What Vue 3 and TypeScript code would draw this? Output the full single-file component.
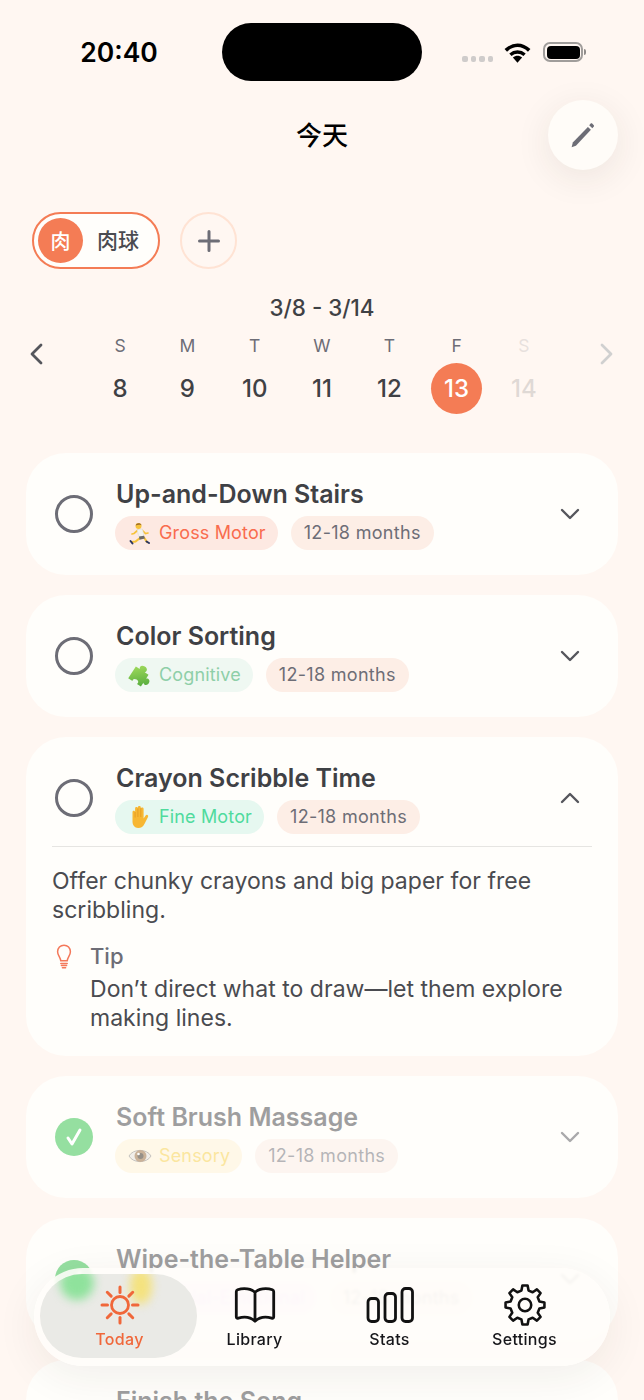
<script setup lang="ts">
type Tag = 'run' | 'puzzle' | 'hand' | 'eye' | 'social' | 'music'

interface Activity {
  title: string
  category: string
  tone: string
  icon: Tag
  done?: boolean
  open?: boolean
  body?: string
  tip?: string
}

const days = [
  { letter: 'S', num: 8 },
  { letter: 'M', num: 9 },
  { letter: 'T', num: 10 },
  { letter: 'W', num: 11 },
  { letter: 'T', num: 12 },
  { letter: 'F', num: 13, today: true },
  { letter: 'S', num: 14, future: true },
]

const activities: Activity[] = [
  { title: 'Up-and-Down Stairs', category: 'Gross Motor', tone: 'gross', icon: 'run' },
  { title: 'Color Sorting', category: 'Cognitive', tone: 'cognitive', icon: 'puzzle' },
  {
    title: 'Crayon Scribble Time',
    category: 'Fine Motor',
    tone: 'fine',
    icon: 'hand',
    open: true,
    body: 'Offer chunky crayons and big paper for free scribbling.',
    tip: 'Don\u2019t direct what to draw\u2014let them explore making lines.',
  },
  { title: 'Soft Brush Massage', category: 'Sensory', tone: 'sensory', icon: 'eye', done: true },
  { title: 'Wipe-the-Table Helper', category: 'Social-Emotional', tone: 'social', icon: 'social', done: true },
  { title: 'Finish the Song', category: 'Language', tone: 'gross', icon: 'music', done: true },
]

// 8 tooth gear outline, drawn around 12,12
function gearPath(): string {
  const pts: string[] = []
  const teeth = 8
  for (let i = 0; i < teeth; i++) {
    const a = (i / teeth) * Math.PI * 2
    const step = Math.PI / teeth
    const list: [number, number][] = [
      [8.1, a - step * 0.62],
      [10.7, a - step * 0.34],
      [10.7, a + step * 0.34],
      [8.1, a + step * 0.62],
    ]
    for (const [r, t] of list) {
      pts.push(`${(12 + r * Math.sin(t)).toFixed(2)} ${(12 - r * Math.cos(t)).toFixed(2)}`)
    }
  }
  return 'M' + pts.join('L') + 'Z'
}

const gear = gearPath()
const sunRays = [0, 45, 90, 135, 180, 225, 270, 315]
</script>

<template>
  <div class="page">
    <div class="status">
      <div class="time">20:40</div>
      <div class="island"></div>
      <div class="status-right">
        <div class="dots"><i></i><i></i><i></i><i></i></div>
        <svg class="wifi" width="27" height="20" viewBox="0 0 27 20">
          <path d="M1.800 7.400C9 .6 18 .6 25.200 7.400" fill="none" stroke="#000" stroke-width="3.600" />
          <path d="M6.400 11.800c4.200-3.700 10-3.700 14.200 0" fill="none" stroke="#000" stroke-width="3.400" />
          <path d="M8.900 14.400c2.800-2.200 6.400-2.200 9.200 0l-4.600 5.400z" fill="#000" />
        </svg>
        <div class="battery"><span></span></div>
        <div class="nub"></div>
      </div>
    </div>

    <header class="head">
      <h1>今天</h1>
      <button class="edit">
        <svg width="28" height="28" viewBox="0 0 28 28">
          <path d="M2.600 26.200l1.200-4.800L18.900 5.900l3 2.900L6.900 24.700z" fill="#6d6d76" />
          <path d="M20.200 4.200l1.300-1.400c.6-.6 1.300-.6 1.900 0l1.200 1.100c.6.600.6 1.300 0 1.900l-1.300 1.400z" fill="#6d6d76" />
        </svg>
      </button>
    </header>

    <div class="kids">
      <div class="kid">
        <span class="avatar">肉</span>
        <span class="kid-name">肉球</span>
      </div>
      <button class="add">
        <svg width="24" height="24" viewBox="0 0 24 24">
          <path d="M12 2.500v19M2.500 12h19" stroke="#6d6d76" stroke-width="3" stroke-linecap="round" />
        </svg>
      </button>
    </div>

    <div class="range">3/8 - 3/14</div>
    <div class="week">
      <div class="side left">
        <svg width="14" height="22" viewBox="0 0 14 22">
          <path d="M12 2L3 11l9 9" fill="none" stroke="#55565c" stroke-width="2.800" stroke-linecap="round" stroke-linejoin="round" />
        </svg>
      </div>
      <div class="days">
        <div v-for="d in days" :key="d.num" class="day" :class="{ future: d.future }">
          <span class="letter">{{ d.letter }}</span>
          <span class="num" :class="{ today: d.today }">{{ d.num }}</span>
        </div>
      </div>
      <div class="side right">
        <svg width="14" height="22" viewBox="0 0 14 22">
          <path d="M2 2l9 9-9 9" fill="none" stroke="#d0d0d0" stroke-width="2.800" stroke-linecap="round" stroke-linejoin="round" />
        </svg>
      </div>
    </div>

    <div class="list">
      <section v-for="a in activities" :key="a.title" class="card" :class="{ done: a.done }">
        <div class="row">
          <div class="check">
            <svg v-if="a.done" width="22" height="22" viewBox="0 0 22 22">
              <path d="M5 12l4 6 8-14" fill="none" stroke="#fff" stroke-width="3" stroke-linecap="round" stroke-linejoin="round" />
            </svg>
          </div>
          <div class="info">
            <h2>{{ a.title }}</h2>
            <div class="tags">
              <span class="tag" :class="a.tone">
                <svg class="emoji" viewBox="0 0 24 24">
                  <g v-if="a.icon === 'run'">
                    <path d="M10 9L6 12.500l-2 .5M14 9l3.500 3.500 2.500-.5" stroke="#f6c33a" stroke-width="1.700" stroke-linecap="round" fill="none" />
                    <path d="M12 17l-4.500 3.500L4 21M16 16.500l3 4.500" stroke="#f6c33a" stroke-width="2.200" stroke-linecap="round" fill="none" />
                    <path d="M9 8.500l5.500-.5 1.500 7-5 1z" fill="#f3f3ef" stroke="#d8d8d2" stroke-width=".5" />
                    <path d="M11 15.500l5-.8 1 2.800-5.500 1.200z" fill="#6b6a68" />
                    <circle cx="10.500" cy="5" r="3" fill="#f6c33a" />
                    <path d="M7.800 4.500C8 2 12.600 1.400 13.500 4.300 11.500 3.500 9.500 3.800 7.800 4.500z" fill="#9a6a2c" />
                    <path d="M2.500 20l2 2.500M18.500 20.500l2.500 1.500" stroke="#2c3560" stroke-width="2" stroke-linecap="round" />
                  </g>
                  <g v-else-if="a.icon === 'puzzle'">
                    <linearGradient id="piece" x1="0" y1="0" x2="1" y2="1">
                      <stop offset="0" stop-color="#a8e05f" />
                      <stop offset="1" stop-color="#4da63a" />
                    </linearGradient>
                    <path
                      transform="rotate(33 12 12) translate(12 12) scale(1.080) translate(-12 -12)"
                      d="M4.500 7.500h4.300c-1.600-1.500-1-4.500 2.700-4.500s4.300 3 2.700 4.500h4.300v4.300c1.500-1.600 4.500-1 4.500 2.200s-3 3.800-4.500 2.200v4.300h-4.300c.8-1.400 0-3.200-2.500-3.200s-3.300 1.800-2.500 3.200H4.500z"
                      fill="url(#piece)"
                    />
                  </g>
                  <g v-else-if="a.icon === 'hand'">
                    <path
                      d="M4.500 13V7c0-1.700 2.600-1.700 2.600 0V3.500c0-1.900 2.800-1.900 2.800 0V2.300c0-1.900 2.900-1.900 2.900 0v1.500c0-1.800 2.800-1.800 2.800 0V13.500l2-2.900c1.100-1.600 3.300-.3 2.400 1.400l-3.300 6.500c-1.400 3-3.500 4.500-6.500 4.500-3.700 0-5.700-3-5.700-6.500z"
                      fill="#f7b733"
                    />
                    <path d="M7.100 7v5.500M9.900 3.500v8.500M12.800 3v9" stroke="#d88f1c" stroke-width=".6" fill="none" />
                  </g>
                  <g v-else-if="a.icon === 'eye'">
                    <path d="M1 12C5 4.500 19 4.500 23 12 19 19.500 5 19.500 1 12z" fill="#e4e0da" stroke="#8f8a84" stroke-width="1" />
                    <circle cx="12.500" cy="12" r="6" fill="#96683a" />
                    <circle cx="12.500" cy="12" r="3" fill="#2f2418" />
                    <circle cx="10.500" cy="10" r="1.300" fill="#fff" />
                  </g>
                  <circle v-else cx="12" cy="12" r="10" fill="#f7d13c" />
                </svg>
                {{ a.category }}
              </span>
              <span class="tag age">12-18 months</span>
            </div>
          </div>
          <svg class="chev" width="20" height="12" viewBox="0 0 20 12">
            <path
              :d="a.open ? 'M2 10l8-8 8 8' : 'M2 2l8 8 8-8'"
              fill="none"
              stroke="#55565c"
              stroke-width="2.400"
              stroke-linecap="round"
              stroke-linejoin="round"
            />
          </svg>
        </div>

        <div v-if="a.open" class="detail">
          <p class="body">{{ a.body }}</p>
          <div class="tip">
            <svg width="16" height="25" viewBox="0 0 16 25" class="bulb">
              <path
                d="M8 1.200C4.300 1.200 1.600 4 1.600 7.800c0 3.400 2.600 5.300 3.200 9h6.400c.6-3.700 3.200-5.600 3.200-9C14.400 4 11.700 1.200 8 1.200zM4.800 19.400h6.400M5.400 21.600h5.200M6.400 23.800h3.200"
                fill="none"
                stroke="#f4785a"
                stroke-width="1.500"
                stroke-linecap="round"
              />
            </svg>
            <div>
              <div class="tip-label">Tip</div>
              <p class="body">{{ a.tip }}</p>
            </div>
          </div>
        </div>
      </section>
    </div>

    <nav class="tabbar">
      <div class="tab active">
        <span class="pill">
          <i class="blob green"></i>
          <i class="blob yellow"></i>
        </span>
        <svg class="tab-icon" viewBox="0 0 44 44">
          <circle cx="22" cy="22" r="8.500" fill="none" stroke="#f0673a" stroke-width="2.800" />
          <path
            v-for="r in sunRays"
            :key="r"
            d="M22 4v5.500"
            stroke="#f0673a"
            stroke-width="3"
            stroke-linecap="round"
            :transform="`rotate(${r} 22 22)`"
          />
        </svg>
        <span class="tab-label">Today</span>
      </div>
      <div class="tab">
        <svg class="tab-icon" viewBox="0 0 44 44">
          <path
            d="M22 9.500C19 5.500 10.500 4.500 4.600 6.800c-.9.4-1.300 1-1.300 2v25c0 1.200.8 1.800 2 1.400 5.800-1.800 12-1.200 16.700 3 4.700-4.200 10.900-4.800 16.700-3 1.200.4 2 -.2 2-1.400v-25c0-1-.4-1.600-1.300-2C33.500 4.500 25 5.500 22 9.500zM22 9.500V38"
            fill="none"
            stroke="#111"
            stroke-width="2.800"
            stroke-linejoin="round"
          />
        </svg>
        <span class="tab-label">Library</span>
      </div>
      <div class="tab">
        <svg class="tab-icon" viewBox="0 0 50 44">
          <rect x="3" y="15.500" width="10.500" height="23" rx="3.500" fill="none" stroke="#111" stroke-width="2.800" />
          <rect x="20" y="10.500" width="10.500" height="28" rx="3.500" fill="none" stroke="#111" stroke-width="2.800" />
          <rect x="37" y="5.500" width="10.500" height="33" rx="3.500" fill="none" stroke="#111" stroke-width="2.800" />
        </svg>
        <span class="tab-label">Stats</span>
      </div>
      <div class="tab">
        <svg class="tab-icon" viewBox="0 0 24 24">
          <path :d="gear" fill="none" stroke="#111" stroke-width="1.400" stroke-linejoin="round" />
          <circle cx="12" cy="12" r="3.400" fill="none" stroke="#111" stroke-width="1.400" />
        </svg>
        <span class="tab-label">Settings</span>
      </div>
    </nav>
  </div>
</template>

<style>
html,
body {
  margin: 0;
  background: #fff7f2;
}
</style>

<style scoped>
.page {
  position: relative;
  width: 644px;
  height: 1400px;
  overflow: hidden;
  background: #fff7f2;
  font-family: Inter, 'Noto Sans CJK SC', sans-serif;
  color: #3f4145;
}

.status {
  display: grid;
  grid-template-columns: 222px 200px 222px;
  padding-top: 23px;
  box-sizing: border-box;
  height: 100px;
}
.time {
  height: 58px;
  line-height: 58px;
  text-align: center;
  padding-left: 16px;
  font-size: 26.500px;
  font-weight: 600;
  color: #000;
}
.island {
  height: 58px;
  border-radius: 29px;
  background: #000;
}
.status-right {
  display: flex;
  align-items: flex-start;
  padding-left: 40px;
  padding-top: 19px;
}
.dots {
  display: flex;
  gap: 3px;
  margin-top: 14px;
}
.dots i {
  width: 5.500px;
  height: 5.500px;
  border-radius: 2px;
  background: #cfcccb;
}
.wifi {
  margin-left: 11px;
  margin-top: 1px;
}
.battery {
  box-sizing: border-box;
  width: 40px;
  height: 20px;
  margin-left: 12px;
  padding: 1.500px;
  border: 2px solid #a09d9b;
  border-radius: 7px;
}
.battery span {
  display: block;
  height: 100%;
  border-radius: 4px;
  background: #000;
}
.nub {
  width: 2px;
  height: 6px;
  margin: 7px 0 0 1px;
  border-radius: 0 2px 2px 0;
  background: #8f8c8a;
}

.head {
  position: relative;
  height: 70px;
  display: flex;
  align-items: center;
  justify-content: center;
}
.head h1 {
  margin: 0 0 3px;
  font-size: 26px;
  font-weight: 500;
  color: #000;
}
.edit {
  position: absolute;
  left: 548px;
  top: 0;
  width: 70px;
  height: 70px;
  padding: 0;
  border: 0;
  border-radius: 50%;
  background: #fffcf8;
  box-shadow: 0 8px 36px rgba(60, 40, 30, 0.09);
  display: flex;
  align-items: center;
  justify-content: center;
}

.kids {
  display: flex;
  gap: 20px;
  margin-top: 42px;
  padding-left: 32px;
}
.kid {
  box-sizing: border-box;
  width: 128px;
  height: 57px;
  border: 2.500px solid #f47c55;
  border-radius: 29px;
  background: #fffefb;
  display: flex;
  align-items: center;
  padding-left: 4px;
}
.avatar {
  width: 45px;
  height: 45px;
  border-radius: 50%;
  background: #f47c55;
  color: #fff;
  font-size: 20px;
  font-weight: 500;
  display: flex;
  align-items: center;
  justify-content: center;
}
.kid-name {
  margin: 0 0 3px 14px;
  font-size: 21px;
  font-weight: 500;
  color: #4a4b50;
}
.add {
  box-sizing: border-box;
  width: 57px;
  height: 57px;
  padding: 0;
  border: 2.500px solid #ffe3d4;
  border-radius: 50%;
  background: transparent;
  display: flex;
  align-items: center;
  justify-content: center;
}

.range {
  margin-top: 25px;
  height: 28px;
  line-height: 28px;
  text-align: center;
  font-size: 22.400px;
  font-weight: 500;
}
.week {
  display: flex;
  margin-top: 11px;
}
.side {
  flex: 0 0 86.400px;
  display: flex;
  box-sizing: border-box;
  padding-top: 10px;
}
.side.left {
  padding-left: 29px;
}
.side.right {
  justify-content: flex-end;
  padding-right: 30px;
}
.days {
  flex: 1;
  display: grid;
  grid-template-columns: repeat(7, 1fr);
}
.day {
  display: flex;
  flex-direction: column;
  align-items: center;
  gap: 5px;
}
.day.future {
  opacity: 0.16;
}
.letter {
  height: 25px;
  line-height: 26px;
  font-size: 17.500px;
  color: #6d6d76;
}
.num {
  width: 51px;
  height: 51px;
  line-height: 51px;
  border-radius: 50%;
  text-align: center;
  font-size: 24px;
  font-weight: 500;
}
.num.today {
  background: #f47c55;
  color: #fff;
}

.list {
  display: flex;
  flex-direction: column;
  gap: 20px;
  margin-top: 39px;
  padding: 0 26px;
}
.card {
  border-radius: 40px;
  background: #fffefb;
}
.row {
  display: flex;
  align-items: center;
  height: 122px;
  box-sizing: border-box;
  padding: 0 38px 0 29px;
}
.check {
  box-sizing: border-box;
  flex: 0 0 38px;
  height: 38px;
  border: 3.500px solid #6d6d76;
  border-radius: 50%;
}
.done .check {
  border: 0;
  background: #95dfa0;
  display: flex;
  align-items: center;
  justify-content: center;
}
.info {
  flex: 1;
  margin-left: 23px;
  padding-bottom: 1px;
}
.info h2 {
  margin: 0;
  font-size: 25px;
  line-height: 32px;
  font-weight: 600;
}
.tags {
  display: flex;
  gap: 13px;
  margin: 6px 0 0 -1px;
}
.tag {
  display: inline-flex;
  align-items: center;
  gap: 7px;
  height: 34px;
  padding: 0 12px 0 13px;
  border-radius: 17px;
  font-size: 18px;
  font-weight: 400;
  letter-spacing: 0.15px;
}
.emoji {
  flex: 0 0 24px;
  width: 24px;
  height: 24px;
}
.done h2,
.done .tags,
.done .chev {
  opacity: 0.5;
}
.gross {
  background: #fde9e2;
  color: #f96c4e;
}
.cognitive {
  background: #eff8f2;
  color: #8ecfa8;
}
.fine {
  background: #e6f8f0;
  color: #4fdb9d;
}
.sensory {
  background: #fff3d6;
  color: #f8cf45;
}
.social {
  background: #f5e2ff;
  color: #d58cff;
}
.age {
  padding: 0 13px;
  letter-spacing: 0.3px;
  background: #fdeee6;
  color: #6d6d76;
}

.detail {
  margin: -13px 26px 0;
  padding: 20px 0 23px;
  border-top: 1px solid #e6e5e2;
}
.body {
  margin: 0;
  font-size: 23px;
  line-height: 29px;
  letter-spacing: 0.03px;
  color: #4a4b50;
}
.tip {
  display: flex;
  margin-top: 12px;
}
.bulb {
  flex: 0 0 16px;
  margin: 7px 18px 0 4px;
}
.tip-label {
  font-size: 22px;
  line-height: 38px;
  font-weight: 500;
  color: #6d6d76;
}

.tabbar {
  position: absolute;
  left: 34px;
  top: 1268px;
  box-sizing: border-box;
  width: 576px;
  height: 98px;
  padding-left: 18px;
  display: grid;
  grid-template-columns: repeat(4, 135px);
  border-radius: 49px;
  background: rgba(255, 253, 249, 0.88);
  -webkit-backdrop-filter: blur(1.500px);
  backdrop-filter: blur(1.500px);
  box-shadow: 0 10px 44px rgba(60, 40, 30, 0.07);
}
.tab {
  position: relative;
  display: flex;
  flex-direction: column;
  align-items: center;
  padding-top: 15px;
}
.pill {
  position: absolute;
  left: -12px;
  top: 6px;
  width: 157px;
  height: 84px;
  overflow: hidden;
  border-radius: 42px;
  background: #eaeae6;
}
.blob {
  position: absolute;
  border-radius: 50%;
  filter: blur(5px);
}
.blob.green {
  left: 20px;
  top: -8px;
  width: 34px;
  height: 34px;
  background: #8fe29c;
}
.blob.yellow {
  left: 90px;
  top: -6px;
  width: 22px;
  height: 36px;
  background: #f4e27e;
}
.tab-icon {
  position: relative;
  width: 44px;
  height: 44px;
}
.tab:nth-child(3) .tab-icon {
  width: 50px;
}
.tab-label {
  position: relative;
  margin-top: 0;
  font-size: 16px;
  line-height: 24px;
  font-weight: 500;
  letter-spacing: 0.3px;
  color: #16161a;
}
.active .tab-label {
  color: #f0673a;
}
</style>
